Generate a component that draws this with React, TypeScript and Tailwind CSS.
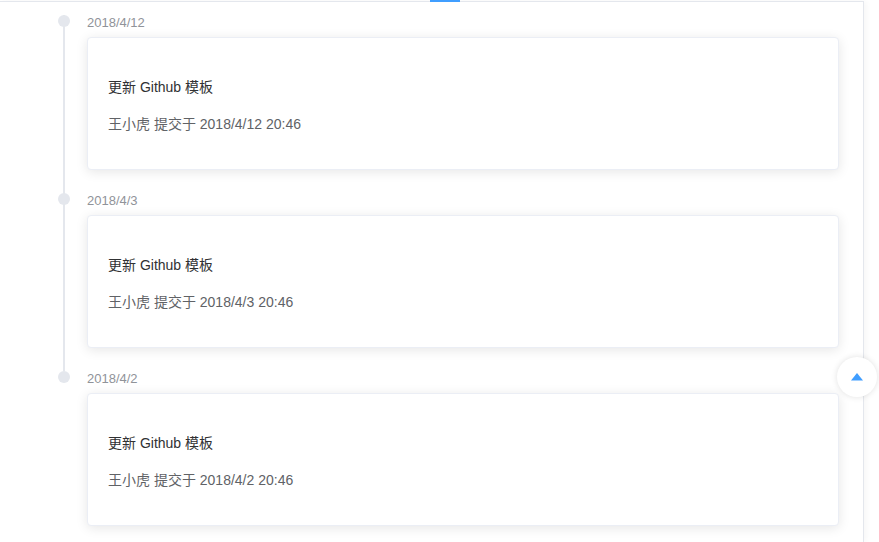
const ITEMS = [
  { date: '2018/4/12', title: '更新 Github 模板', note: '王小虎 提交于 2018/4/12 20:46' },
  { date: '2018/4/3', title: '更新 Github 模板', note: '王小虎 提交于 2018/4/3 20:46' },
  { date: '2018/4/2', title: '更新 Github 模板', note: '王小虎 提交于 2018/4/2 20:46' },
];

function TimelineItem({ date, title, note, last }: { date: string; title: string; note: string; last: boolean }) {
  return (
    <li className="flex">
      {/* node + tail */}
      <div className="relative w-[28px] shrink-0">
        {!last && <div className="absolute left-[4px] top-[3px] h-full border-l-2 border-[#e4e7ed]" />}
        <div className="relative ml-[-1px] mt-[3px] w-3 h-3 rounded-full bg-[#e4e7ed]" />
      </div>
      <div className="flex-1 pb-5">
        <div className="pt-1 mb-2 text-[13px] leading-[13px] text-[#909399]">{date}</div>
        <div className="rounded-[4px] border border-[#ebeef5] bg-white shadow-[0_2px_12px_0_rgba(0,0,0,0.1)] p-5">
          <h4 className="mt-[19px] text-[14px] leading-5 font-normal text-[#303133]">{title}</h4>
          <p className="mt-[17px] mb-[15px] text-[14px] leading-5 text-[#606266]">{note}</p>
        </div>
      </div>
    </li>
  );
}

export default function App() {
  return (
    <div className="relative w-[879px] h-[542px] overflow-hidden bg-white font-['Liberation_Sans','Noto_Sans_CJK_SC',sans-serif]">
      <div className="mt-px w-[864px] h-[541px] border-t border-r border-[#e4e7ed] shadow-[2px_0_6px_rgba(0,0,0,0.04)] pl-[59px] pr-[24px] pt-[10px]">
        <ul className="flex flex-col">
          {ITEMS.map((it, i) => (
            <TimelineItem key={it.date} {...it} last={i === ITEMS.length - 1} />
          ))}
        </ul>
      </div>

      {/* scroll indicator */}
      <div className="absolute left-[430px] top-0 w-[30px] h-[2px] bg-[#409eff]" />

      {/* back to top */}
      <div className="absolute left-[837px] top-[357px] w-10 h-10 rounded-full bg-white shadow-[0_0_6px_rgba(0,0,0,0.12)] flex items-center justify-center">
        <svg width="12" height="8" viewBox="0 0 12 8">
          <path d="M6 0 L12 7.5 L0 7.5 Z" fill="#409eff" />
        </svg>
      </div>
    </div>
  );
}
